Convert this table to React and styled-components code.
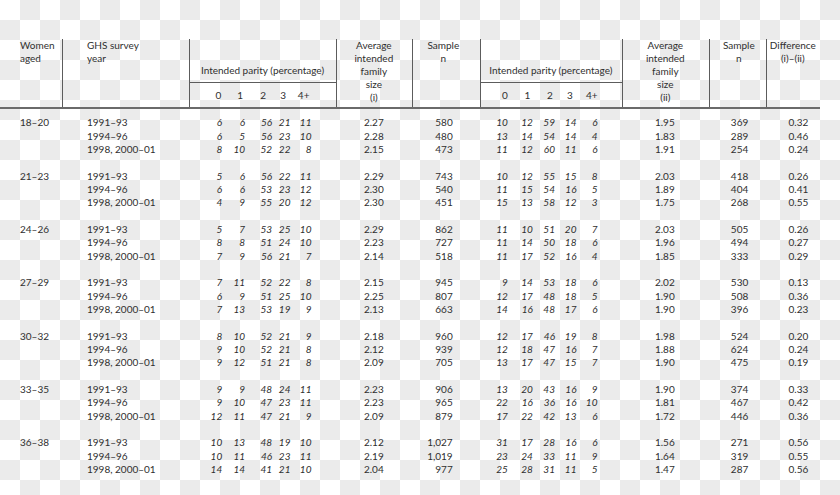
import React from "react";
import styled, { createGlobalStyle } from "styled-components";

const GlobalStyle = createGlobalStyle`
  html, body {
    margin: 0;
    padding: 0;
  }
  body {
    width: 840px;
    height: 495px;
    overflow: hidden;
    background-color: #fff;
    background-image: conic-gradient(#ebebeb 0 25%, #ffffff 0 50%, #ebebeb 0 75%, #ffffff 0);
    background-size: 40px 40px;
    background-position: 0 0;
    font-family: Lato, "Open Sans", "Noto Sans", sans-serif;
    color: #2f2f2f;
  }
`;

const COLS = "62px 127px 147px 75.7px 68.3px 141.7px 87.3px 56.7px 54.3px";
const P1 = "33.7px 22.8px 27.2px 18.3px 21px 1fr";
const P2 = "28.3px 25px 22.2px 21.5px 21px 1fr";
const LINE = "#5c5c5c";

const Page = styled.div`
  padding-top: 39px;
  width: 840px;
  font-size: 10px;
`;

const HeaderRow = styled.div`
  display: grid;
  grid-template-columns: ${COLS};
  width: 820px;
  height: 70px;
  box-sizing: border-box;
  border-bottom: 2px solid #6a6a6a;
`;

const HeadCell = styled.div`
  box-shadow: ${(p) => (p.$line ? `inset 1px 0 0 ${LINE}` : "none")};
  padding-left: ${(p) => p.$pl || 0}px;
  padding-right: ${(p) => p.$pr || 0}px;
  text-align: ${(p) => p.$align || "center"};
  line-height: 12.9px;
  white-space: pre-line;
`;

const ParityHead = styled.div`
  display: flex;
  flex-direction: column;
  box-shadow: inset 1px 0 0 ${LINE};
`;

const ParityTitle = styled.div`
  flex: 1;
  display: flex;
  align-items: flex-end;
  justify-content: center;
  padding-bottom: 5px;
  line-height: 12.9px;
  border-bottom: 1px solid ${LINE};
`;

const ParityGrid = styled.div`
  display: grid;
  grid-template-columns: ${(p) => p.$cols};
  padding-top: ${(p) => p.$pt || 0}px;
  height: ${(p) => p.$h || "auto"};
  box-sizing: border-box;
`;

const HeadDigit = styled.span`
  text-align: right;
  padding-right: ${(p) => p.$pr}px;
  line-height: 12.9px;
`;

const Body = styled.div`
  padding-top: 7.4px;
  width: 820px;
`;

const Group = styled.div`
  margin-bottom: 13.33px;
`;

const Row = styled.div`
  display: grid;
  grid-template-columns: ${COLS};
  height: 13.33px;
  line-height: 13.33px;
`;

const Cell = styled.span`
  text-align: ${(p) => p.$align || "left"};
  padding-left: ${(p) => p.$pl || 0}px;
  padding-right: ${(p) => p.$pr || 0}px;
  white-space: nowrap;
`;

const Pct = styled.span`
  font-style: italic;
  text-align: right;
  padding-right: ${(p) => p.$pr || 0}px;
`;

const groups = [
  { age: "18–20", rows: [
    ["1991–93", [6, 6, 56, 21, 11], "2.27", "580", [10, 12, 59, 14, 6], "1.95", "369", "0.32"],
    ["1994–96", [6, 5, 56, 23, 10], "2.28", "480", [13, 14, 54, 14, 4], "1.83", "289", "0.46"],
    ["1998, 2000–01", [8, 10, 52, 22, 8], "2.15", "473", [11, 12, 60, 11, 6], "1.91", "254", "0.24"],
  ] },
  { age: "21–23", rows: [
    ["1991–93", [5, 6, 56, 22, 11], "2.29", "743", [10, 12, 55, 15, 8], "2.03", "418", "0.26"],
    ["1994–96", [6, 6, 53, 23, 12], "2.30", "540", [11, 15, 54, 16, 5], "1.89", "404", "0.41"],
    ["1998, 2000–01", [4, 9, 55, 20, 12], "2.30", "451", [15, 13, 58, 12, 3], "1.75", "268", "0.55"],
  ] },
  { age: "24–26", rows: [
    ["1991–93", [5, 7, 53, 25, 10], "2.29", "862", [11, 10, 51, 20, 7], "2.03", "505", "0.26"],
    ["1994–96", [8, 8, 51, 24, 10], "2.23", "727", [11, 14, 50, 18, 6], "1.96", "494", "0.27"],
    ["1998, 2000–01", [7, 9, 56, 21, 7], "2.14", "518", [11, 17, 52, 16, 4], "1.85", "333", "0.29"],
  ] },
  { age: "27–29", rows: [
    ["1991–93", [7, 11, 52, 22, 8], "2.15", "945", [9, 14, 53, 18, 6], "2.02", "530", "0.13"],
    ["1994–96", [6, 9, 51, 25, 10], "2.25", "807", [12, 17, 48, 18, 5], "1.90", "508", "0.36"],
    ["1998, 2000–01", [7, 13, 53, 19, 9], "2.13", "663", [14, 16, 48, 17, 6], "1.90", "396", "0.23"],
  ] },
  { age: "30–32", rows: [
    ["1991–93", [8, 10, 52, 21, 9], "2.18", "960", [12, 17, 46, 19, 8], "1.98", "524", "0.20"],
    ["1994–96", [9, 10, 52, 21, 8], "2.12", "939", [12, 18, 47, 16, 7], "1.88", "624", "0.24"],
    ["1998, 2000–01", [9, 12, 51, 21, 8], "2.09", "705", [13, 17, 47, 15, 7], "1.90", "475", "0.19"],
  ] },
  { age: "33–35", rows: [
    ["1991–93", [9, 9, 48, 24, 11], "2.23", "906", [13, 20, 43, 16, 9], "1.90", "374", "0.33"],
    ["1994–96", [9, 10, 47, 23, 11], "2.23", "965", [22, 16, 36, 16, 10], "1.81", "467", "0.42"],
    ["1998, 2000–01", [12, 11, 47, 21, 9], "2.09", "879", [17, 22, 42, 13, 6], "1.72", "446", "0.36"],
  ] },
  { age: "36–38", rows: [
    ["1991–93", [10, 13, 48, 19, 10], "2.12", "1,027", [31, 17, 28, 16, 6], "1.56", "271", "0.56"],
    ["1994–96", [10, 11, 46, 23, 11], "2.19", "1,019", [23, 24, 33, 11, 9], "1.64", "319", "0.55"],
    ["1998, 2000–01", [14, 14, 41, 21, 10], "2.04", "977", [25, 28, 31, 11, 5], "1.47", "287", "0.56"],
  ] },
];

const HEAD_DIGITS = ["0", "1", "2", "3", "4+"];
const HEAD_PAD_1 = [1.5, 2.5, 6.5, 4.8, 2.5];
const HEAD_PAD_2 = [0.4, 3.1, 2.6, 4.1, 0.3];

function ParityHeader({ cols, pads }) {
  return (
    <ParityHead>
      <ParityTitle>Intended parity (percentage)</ParityTitle>
      <ParityGrid $cols={cols} $pt={6} $h="24px">
        {HEAD_DIGITS.map((d, i) => (
          <HeadDigit key={d} $pr={pads[i]}>{d}</HeadDigit>
        ))}
      </ParityGrid>
    </ParityHead>
  );
}

function ParityCells({ cols, values }) {
  return (
    <ParityGrid $cols={cols}>
      {values.map((v, i) => (
        <Pct key={i} $pr={0.5}>{v}</Pct>
      ))}
    </ParityGrid>
  );
}

export default function App() {
  return (
    <>
      <GlobalStyle />
      <Page>
        <HeaderRow>
          <HeadCell $align="left" $pl={20}>{"Women\naged"}</HeadCell>
          <HeadCell $line $align="left" $pl={25}>{"GHS survey\nyear"}</HeadCell>
          <ParityHeader cols={P1} pads={HEAD_PAD_1} />
          <HeadCell $line>{"Average\nintended\nfamily\nsize\n(i)"}</HeadCell>
          <HeadCell $line $pr={5}>{"Sample\nn"}</HeadCell>
          <ParityHeader cols={P2} pads={HEAD_PAD_2} />
          <HeadCell $line>{"Average\nintended\nfamily\nsize\n(ii)"}</HeadCell>
          <HeadCell $line $pl={3}>{"Sample\nn"}</HeadCell>
          <HeadCell $line>{"Difference\n(i)–(ii)"}</HeadCell>
        </HeaderRow>
        <Body>
          {groups.map((g) => (
            <Group key={g.age}>
              {g.rows.map((r, i) => (
                <Row key={r[0]}>
                  <Cell $pl={20}>{i === 0 ? g.age : ""}</Cell>
                  <Cell $pl={25}>{r[0]}</Cell>
                  <ParityCells cols={P1} values={r[1]} />
                  <Cell $align="center">{r[2]}</Cell>
                  <Cell $align="right" $pr={27.3}>{r[3]}</Cell>
                  <ParityCells cols={P2} values={r[4]} />
                  <Cell $align="center" $pr={1}>{r[5]}</Cell>
                  <Cell $align="right" $pr={17.4}>{r[6]}</Cell>
                  <Cell $align="right" $pr={11.7}>{r[7]}</Cell>
                </Row>
              ))}
            </Group>
          ))}
        </Body>
      </Page>
    </>
  );
}
